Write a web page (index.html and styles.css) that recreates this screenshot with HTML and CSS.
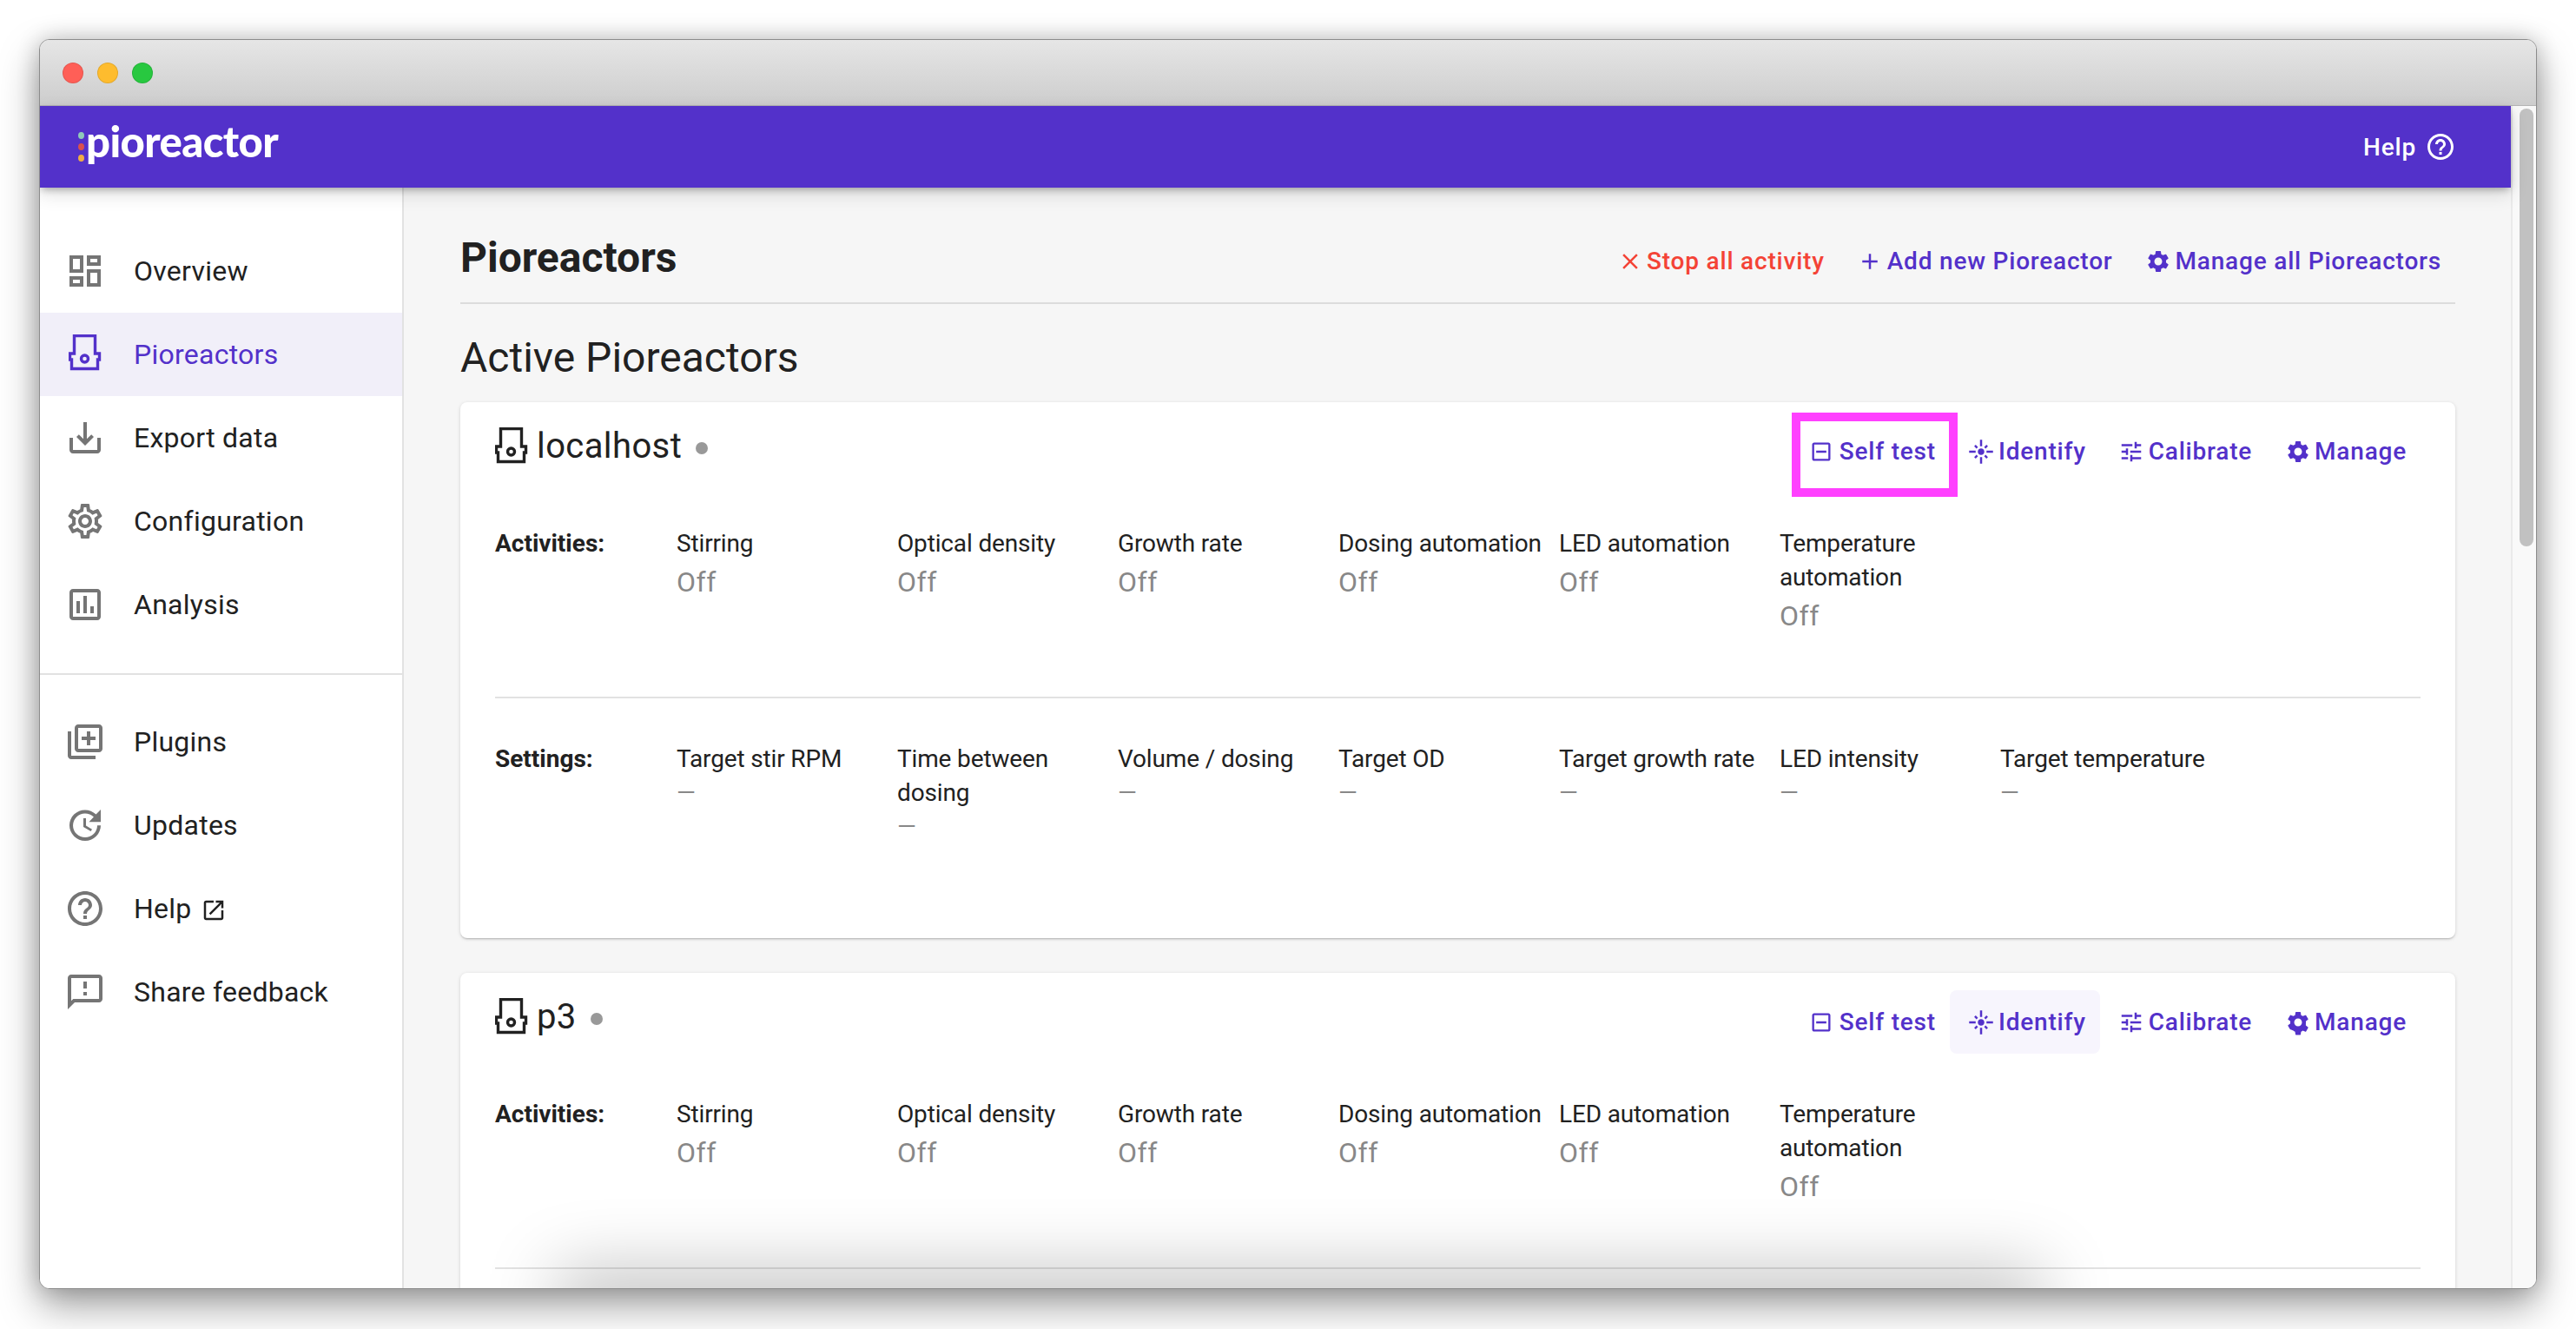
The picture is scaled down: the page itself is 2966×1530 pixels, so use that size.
FILE: index.html
```html
<!DOCTYPE html>
<html lang="en">
<head>
  <meta charset="UTF-8">
  <title>Pioreactors</title>
  <link rel="stylesheet" href="styles.css">
</head>
<body>
  <div class="window">
    <div class="titlebar">
      <span class="light light-red"></span>
      <span class="light light-yellow"></span>
      <span class="light light-green"></span>
    </div>

    <div class="viewport">
      <div class="page">
        <header class="topbar">
          <div class="logo">
            <span class="logo-dots"><i class="dot-teal"></i><i class="dot-red"></i><i class="dot-orange"></i></span>
            <span class="logo-text">pioreactor</span>
          </div>
          <a class="topbar-help">Help
            <svg viewBox="0 0 24 24"><path d="M11 18h2v-2h-2v2zm1-16C6.48 2 2 6.48 2 12s4.48 10 10 10 10-4.48 10-10S17.52 2 12 2zm0 18c-4.41 0-8-3.59-8-8s3.59-8 8-8 8 3.59 8 8-3.59 8-8 8zm0-14c-2.21 0-4 1.79-4 4h2c0-1.1.9-2 2-2s2 .9 2 2c0 2-3 1.75-3 5h2c0-2.25 3-2.5 3-5 0-2.21-1.79-4-4-4z"/></svg>
          </a>
        </header>

        <div class="columns">
          <!-- left menu -->
          <nav class="sidebar">
            <ul class="menu">
              <li class="menu-item">
                <svg class="menu-icon" viewBox="0 0 24 24"><path d="M19 5v2h-4V5h4M9 5v6H5V5h4m10 8v6h-4v-6h4M9 17v2H5v-2h4M21 3h-8v6h8V3zM11 3H3v10h8V3zm10 8h-8v10h8V11zm-10 4H3v6h8v-6z"/></svg>
                Overview
              </li>
              <li class="menu-item active">
                <svg class="menu-icon reactor-icon" viewBox="0 0 38 42"><path d="M6.5 1.5H30.500V22H35.500V29H33.500V39.500H3.500V29H1.500V22H6.500Z"/><circle cx="18.500" cy="28" r="4"/></svg>
                Pioreactors
              </li>
              <li class="menu-item">
                <svg class="menu-icon" viewBox="0 0 24 24"><path d="M19 12v7H5v-7H3v7c0 1.100.9 2 2 2h14c1.100 0 2-.9 2-2v-7h-2zm-6 .67l2.590-2.580L17 11.500l-5 5-5-5 1.410-1.410L11 12.670V3h2z"/></svg>
                Export data
              </li>
              <li class="menu-item">
                <svg class="menu-icon" viewBox="0 0 24 24"><path d="M19.430 12.980c.04-.32.07-.64.07-.98 0-.34-.03-.66-.07-.98l2.110-1.650c.19-.15.24-.42.12-.64l-2-3.460c-.09-.16-.26-.25-.44-.25-.06 0-.12.01-.17.03l-2.490 1c-.52-.4-1.080-.73-1.690-.98l-.38-2.650C14.460 2.180 14.250 2 14 2h-4c-.25 0-.46.18-.49.42l-.38 2.650c-.61.25-1.170.59-1.690.98l-2.490-1c-.06-.02-.12-.03-.18-.03-.17 0-.34.09-.43.25l-2 3.460c-.13.22-.07.49.12.64l2.110 1.650c-.04.32-.07.65-.07.98 0 .33.03.66.07.98l-2.110 1.650c-.19.15-.24.42-.12.64l2 3.460c.09.16.26.25.44.25.06 0 .12-.01.17-.03l2.490-1c.52.4 1.080.73 1.690.98l.38 2.650c.03.24.24.42.49.42h4c.25 0 .46-.18.49-.42l.38-2.650c.61-.25 1.170-.59 1.690-.98l2.490 1c.06.02.12.03.18.03.17 0 .34-.09.43-.25l2-3.460c.12-.22.07-.49-.12-.64l-2.110-1.650zm-1.980-1.710c.04.31.05.52.05.73 0 .21-.02.43-.05.73l-.14 1.130.89.7 1.080.84-.7 1.210-1.270-.51-1.040-.42-.9.68c-.43.32-.84.56-1.250.73l-1.060.43-.16 1.130-.2 1.350h-1.400l-.19-1.350-.16-1.130-1.060-.43c-.43-.18-.83-.41-1.230-.71l-.91-.7-1.060.43-1.270.51-.7-1.210 1.080-.84.89-.7-.14-1.130c-.03-.31-.05-.54-.05-.74s.02-.43.05-.73l.14-1.130-.89-.7-1.080-.84.7-1.210 1.270.51 1.040.42.9-.68c.43-.32.84-.56 1.250-.73l1.060-.43.16-1.130.2-1.350h1.390l.19 1.350.16 1.130 1.060.43c.43.18.83.41 1.230.71l.91.7 1.060-.43 1.270-.51.7 1.210-1.070.85-.89.7.14 1.130zM12 8c-2.210 0-4 1.790-4 4s1.790 4 4 4 4-1.790 4-4-1.790-4-4-4zm0 6c-1.100 0-2-.9-2-2s.9-2 2-2 2 .9 2 2-.9 2-2 2z"/></svg>
                Configuration
              </li>
              <li class="menu-item">
                <svg class="menu-icon" viewBox="0 0 24 24"><path d="M9 17H7v-7h2v7zm4 0h-2V7h2v10zm4 0h-2v-4h2v4zm2 2H5V5h14v14zm0-16H5c-1.100 0-2 .9-2 2v14c0 1.100.9 2 2 2h14c1.100 0 2-.9 2-2V5c0-1.100-.9-2-2-2z"/></svg>
                Analysis
              </li>
            </ul>
            <hr class="menu-divider">
            <ul class="menu">
              <li class="menu-item">
                <svg class="menu-icon" viewBox="0 0 24 24"><path d="M4 6H2v14c0 1.100.9 2 2 2h14v-2H4V6zm16-4H8c-1.100 0-2 .9-2 2v12c0 1.100.9 2 2 2h12c1.100 0 2-.9 2-2V4c0-1.100-.9-2-2-2zm0 14H8V4h12v12zm-7-2h2v-3h3V9h-3V6h-2v3h-3v2h3z"/></svg>
                Plugins
              </li>
              <li class="menu-item">
                <svg class="menu-icon" viewBox="0 0 24 24"><path d="M21 10.120h-6.780l2.740-2.820c-2.730-2.700-7.150-2.800-9.880-.1-2.730 2.710-2.730 7.080 0 9.790s7.150 2.710 9.880 0C18.320 15.650 19 14.080 19 12.100h2c0 1.980-.88 4.550-2.640 6.290-3.510 3.480-9.210 3.480-12.720 0-3.500-3.470-3.530-9.110-.02-12.580s9.140-3.470 12.650 0L21 3v7.120zM12.500 8v4.250l3.500 2.080-.72 1.210L11 13V8h1.500z"/></svg>
                Updates
              </li>
              <li class="menu-item">
                <svg class="menu-icon" viewBox="0 0 24 24"><path d="M11 18h2v-2h-2v2zm1-16C6.480 2 2 6.480 2 12s4.480 10 10 10 10-4.480 10-10S17.520 2 12 2zm0 18c-4.410 0-8-3.590-8-8s3.590-8 8-8 8 3.590 8 8-3.590 8-8 8zm0-14c-2.210 0-4 1.790-4 4h2c0-1.100.9-2 2-2s2 .9 2 2c0 2-3 1.750-3 5h2c0-2.250 3-2.500 3-5 0-2.210-1.790-4-4-4z"/></svg>
                Help
                <svg class="external-icon" viewBox="0 0 24 24"><path d="M19 19H5V5h7V3H5c-1.110 0-2 .9-2 2v14c0 1.100.89 2 2 2h14c1.100 0 2-.9 2-2v-7h-2v7zM14 3v2h3.590l-9.830 9.830 1.410 1.410L19 6.410V10h2V3h-7z"/></svg>
              </li>
              <li class="menu-item">
                <svg class="menu-icon" viewBox="0 0 24 24"><path d="M20 2H4c-1.100 0-1.990.9-1.990 2L2 22l4-4h14c1.100 0 2-.9 2-2V4c0-1.100-.9-2-2-2zm0 14H5.170L4 17.170V4h16v12zm-9-4h2v2h-2zm0-6h2v4h-2z"/></svg>
                Share feedback
              </li>
            </ul>
          </nav>

          <main class="content">
            <div class="page-head">
              <h1 class="page-title">Pioreactors</h1>
              <div class="actions">
                <a class="btn btn-danger">
                  <span class="btn-icon"><svg viewBox="0 0 24 24"><path d="M19 6.410L17.590 5 12 10.590 6.410 5 5 6.410 10.590 12 5 17.590 6.410 19 12 13.410 17.590 19 19 17.590 13.410 12z"/></svg></span>
                  Stop all activity
                </a>
                <a class="btn">
                  <span class="btn-icon"><svg viewBox="0 0 24 24"><path d="M19 13h-6v6h-2v-6H5v-2h6V5h2v6h6v2z"/></svg></span>
                  Add new Pioreactor
                </a>
                <a class="btn">
                  <span class="btn-icon"><svg viewBox="0 0 24 24"><path d="M19.140 12.940c.04-.3.06-.61.06-.94 0-.32-.02-.64-.07-.94l2.030-1.580c.18-.14.23-.41.12-.61l-1.920-3.320c-.12-.22-.37-.29-.59-.22l-2.390.96c-.5-.38-1.030-.7-1.620-.94l-.36-2.540c-.04-.24-.24-.41-.48-.41h-3.840c-.24 0-.43.17-.47.41l-.36 2.540c-.59.24-1.130.57-1.620.94l-2.390-.96c-.22-.08-.47 0-.59.22L2.740 8.870c-.12.21-.08.47.12.61l2.030 1.580c-.05.3-.09.63-.09.94s.02.64.07.94l-2.030 1.580c-.18.14-.23.41-.12.61l1.920 3.320c.12.22.37.29.59.22l2.390-.96c.5.38 1.030.7 1.620.94l.36 2.540c.05.24.24.41.48.41h3.840c.24 0 .44-.17.47-.41l.36-2.540c.59-.24 1.130-.56 1.620-.94l2.390.96c.22.08.47 0 .59-.22l1.920-3.320c.12-.22.07-.47-.12-.61l-2.010-1.580zM12 15.600c-1.980 0-3.600-1.620-3.600-3.600s1.620-3.600 3.600-3.600 3.600 1.620 3.600 3.600-1.620 3.600-3.600 3.600z"/></svg></span>
                  Manage all Pioreactors
                </a>
              </div>
            </div>

            <h2 class="section-title">Active Pioreactors</h2>

            <!-- localhost -->
            <section class="card">
              <div class="card-head">
                <div class="unit-name">
                  <svg class="reactor-icon" viewBox="0 0 38 42"><path d="M6.5 1.5H30.500V22H35.500V29H33.500V39.500H3.500V29H1.500V22H6.500Z"/><circle cx="18.500" cy="28" r="4"/></svg>
                  <span>localhost</span>
                  <i class="status-dot"></i>
                </div>
                <div class="actions">
                  <a class="btn highlighted">
                    <span class="btn-icon"><svg class="test-glyph" viewBox="0 0 24 24"><path d="M7 11h10v2H7zm12-8H5c-1.100 0-2 .9-2 2v14c0 1.100.9 2 2 2h14c1.100 0 2-.9 2-2V5c0-1.100-.9-2-2-2zm0 16H5V5h14v14z"/></svg></span>
                    Self test
                  </a>
                  <a class="btn">
                    <span class="btn-icon"><svg viewBox="0 0 24 24"><path d="M7 11H1v2h6v-2zm2.170-3.240L7.050 5.640 5.640 7.050l2.120 2.120 1.410-1.410zM13 1h-2v6h2V1zm5.360 6.050l-1.410-1.410-2.120 2.120 1.410 1.410 2.120-2.120zM17 11v2h6v-2h-6zm-5-2c-1.660 0-3 1.340-3 3s1.340 3 3 3 3-1.340 3-3-1.340-3-3-3zm2.830 7.240l2.120 2.120 1.410-1.410-2.120-2.120-1.410 1.410zm-9.190.71l1.410 1.410 2.120-2.120-1.410-1.410-2.120 2.120zM11 23h2v-6h-2v6z"/></svg></span>
                    Identify
                  </a>
                  <a class="btn">
                    <span class="btn-icon"><svg viewBox="0 0 24 24"><path d="M3 17v2h6v-2H3zM3 5v2h10V5H3zm10 16v-2h8v-2h-8v-2h-2v6h2zM7 9v2H3v2h4v2h2V9H7zm14 4v-2H11v2h10zm-6-4h2V7h4V5h-4V3h-2v6z"/></svg></span>
                    Calibrate
                  </a>
                  <a class="btn">
                    <span class="btn-icon"><svg viewBox="0 0 24 24"><path d="M19.140 12.940c.04-.3.06-.61.06-.94 0-.32-.02-.64-.07-.94l2.030-1.580c.18-.14.23-.41.12-.61l-1.920-3.320c-.12-.22-.37-.29-.59-.22l-2.390.96c-.5-.38-1.030-.7-1.620-.94l-.36-2.540c-.04-.24-.24-.41-.48-.41h-3.840c-.24 0-.43.17-.47.41l-.36 2.540c-.59.24-1.130.57-1.620.94l-2.390-.96c-.22-.08-.47 0-.59.22L2.740 8.870c-.12.21-.08.47.12.61l2.030 1.580c-.05.3-.09.63-.09.94s.02.64.07.94l-2.030 1.580c-.18.14-.23.41-.12.61l1.920 3.320c.12.22.37.29.59.22l2.390-.96c.5.38 1.030.7 1.620.94l.36 2.540c.05.24.24.41.48.41h3.840c.24 0 .44-.17.47-.41l.36-2.540c.59-.24 1.130-.56 1.620-.94l2.390.96c.22.08.47 0 .59-.22l1.920-3.320c.12-.22.07-.47-.12-.61l-2.010-1.580zM12 15.600c-1.980 0-3.600-1.620-3.600-3.600s1.620-3.600 3.600-3.600 3.600 1.620 3.600 3.600-1.620 3.600-3.600 3.600z"/></svg></span>
                    Manage
                  </a>
                </div>
              </div>

              <div class="stat-row">
                <div class="stat-label">Activities:</div>
                <div class="stat"><div class="stat-name">Stirring</div><div class="stat-value">Off</div></div>
                <div class="stat"><div class="stat-name">Optical density</div><div class="stat-value">Off</div></div>
                <div class="stat"><div class="stat-name">Growth rate</div><div class="stat-value">Off</div></div>
                <div class="stat"><div class="stat-name">Dosing automation</div><div class="stat-value">Off</div></div>
                <div class="stat"><div class="stat-name">LED automation</div><div class="stat-value">Off</div></div>
                <div class="stat"><div class="stat-name">Temperature automation</div><div class="stat-value">Off</div></div>
              </div>

              <hr class="card-divider">

              <div class="stat-row settings-row">
                <div class="stat-label">Settings:</div>
                <div class="stat"><div class="stat-name">Target stir RPM</div><div class="stat-empty">—</div></div>
                <div class="stat"><div class="stat-name">Time between dosing</div><div class="stat-empty">—</div></div>
                <div class="stat"><div class="stat-name">Volume / dosing</div><div class="stat-empty">—</div></div>
                <div class="stat"><div class="stat-name">Target OD</div><div class="stat-empty">—</div></div>
                <div class="stat"><div class="stat-name">Target growth rate</div><div class="stat-empty">—</div></div>
                <div class="stat"><div class="stat-name">LED intensity</div><div class="stat-empty">—</div></div>
                <div class="stat"><div class="stat-name">Target temperature</div><div class="stat-empty">—</div></div>
              </div>
            </section>

            <!-- p3 -->
            <section class="card">
              <div class="card-head">
                <div class="unit-name">
                  <svg class="reactor-icon" viewBox="0 0 38 42"><path d="M6.5 1.5H30.500V22H35.500V29H33.500V39.500H3.500V29H1.500V22H6.500Z"/><circle cx="18.500" cy="28" r="4"/></svg>
                  <span>p3</span>
                  <i class="status-dot"></i>
                </div>
                <div class="actions">
                  <a class="btn">
                    <span class="btn-icon"><svg class="test-glyph" viewBox="0 0 24 24"><path d="M7 11h10v2H7zm12-8H5c-1.100 0-2 .9-2 2v14c0 1.100.9 2 2 2h14c1.100 0 2-.9 2-2V5c0-1.100-.9-2-2-2zm0 16H5V5h14v14z"/></svg></span>
                    Self test
                  </a>
                  <a class="btn hovered">
                    <span class="btn-icon"><svg viewBox="0 0 24 24"><path d="M7 11H1v2h6v-2zm2.170-3.240L7.050 5.640 5.640 7.050l2.120 2.120 1.410-1.410zM13 1h-2v6h2V1zm5.360 6.050l-1.410-1.410-2.120 2.120 1.410 1.410 2.120-2.120zM17 11v2h6v-2h-6zm-5-2c-1.660 0-3 1.340-3 3s1.340 3 3 3 3-1.340 3-3-1.340-3-3-3zm2.830 7.240l2.120 2.120 1.410-1.410-2.120-2.120-1.410 1.410zm-9.190.71l1.410 1.410 2.120-2.120-1.410-1.410-2.120 2.120zM11 23h2v-6h-2v6z"/></svg></span>
                    Identify
                  </a>
                  <a class="btn">
                    <span class="btn-icon"><svg viewBox="0 0 24 24"><path d="M3 17v2h6v-2H3zM3 5v2h10V5H3zm10 16v-2h8v-2h-8v-2h-2v6h2zM7 9v2H3v2h4v2h2V9H7zm14 4v-2H11v2h10zm-6-4h2V7h4V5h-4V3h-2v6z"/></svg></span>
                    Calibrate
                  </a>
                  <a class="btn">
                    <span class="btn-icon"><svg viewBox="0 0 24 24"><path d="M19.140 12.940c.04-.3.06-.61.06-.94 0-.32-.02-.64-.07-.94l2.030-1.580c.18-.14.23-.41.12-.61l-1.920-3.320c-.12-.22-.37-.29-.59-.22l-2.390.96c-.5-.38-1.030-.7-1.620-.94l-.36-2.540c-.04-.24-.24-.41-.48-.41h-3.840c-.24 0-.43.17-.47.41l-.36 2.540c-.59.24-1.130.57-1.620.94l-2.390-.96c-.22-.08-.47 0-.59.22L2.740 8.870c-.12.21-.08.47.12.61l2.030 1.580c-.05.3-.09.63-.09.94s.02.64.07.94l-2.030 1.580c-.18.14-.23.41-.12.61l1.920 3.320c.12.22.37.29.59.22l2.390.96c.5.38 1.030.7 1.620.94l.36 2.540c.05.24.24.41.48.41h3.840c.24 0 .44-.17.47-.41l.36-2.540c.59-.24 1.130-.56 1.620-.94l2.390.96c.22.08.47 0 .59-.22l1.920-3.320c.12-.22.07-.47-.12-.61l-2.010-1.580zM12 15.600c-1.980 0-3.600-1.620-3.600-3.600s1.620-3.600 3.600-3.600 3.600 1.620 3.600 3.600-1.620 3.600-3.600 3.600z"/></svg></span>
                    Manage
                  </a>
                </div>
              </div>

              <div class="stat-row">
                <div class="stat-label">Activities:</div>
                <div class="stat"><div class="stat-name">Stirring</div><div class="stat-value">Off</div></div>
                <div class="stat"><div class="stat-name">Optical density</div><div class="stat-value">Off</div></div>
                <div class="stat"><div class="stat-name">Growth rate</div><div class="stat-value">Off</div></div>
                <div class="stat"><div class="stat-name">Dosing automation</div><div class="stat-value">Off</div></div>
                <div class="stat"><div class="stat-name">LED automation</div><div class="stat-value">Off</div></div>
                <div class="stat"><div class="stat-name">Temperature automation</div><div class="stat-value">Off</div></div>
              </div>

              <hr class="card-divider">
            </section>
          </main>
        </div>
      </div>

      <div class="scrollbar"><div class="scrollbar-thumb"></div></div>
    </div>

    <div class="bottom-smudge"></div>
  </div>
</body>
</html>
```

FILE: styles.css
```css
/* base */
html, body {
  margin: 0;
  height: 100%;
}
body {
  box-sizing: border-box;
  height: 1530px;
  padding: 45px 45px 46px;
  overflow: hidden;
  background-color: #fff;
  font-family: Roboto, "Liberation Sans", sans-serif;
  color: #212121;
}
a {
  color: inherit;
  text-decoration: none;
}
ul {
  list-style: none;
  margin: 0;
  padding: 0;
}
svg {
  fill: currentColor;
  display: block;
}

/* browser window */
.window {
  position: relative;
  box-sizing: border-box;
  width: 2876px;
  height: 1439px;
  display: flex;
  flex-direction: column;
  overflow: hidden;
  border: 1px solid #8c8c8c;
  border-radius: 12px;
  background-color: #fff;
  box-shadow: 0 20px 46px rgba(0, 0, 0, 0.36), 0 0 26px rgba(0, 0, 0, 0.2);
}
.titlebar {
  flex: none;
  height: 75px;
  display: flex;
  align-items: center;
  gap: 16px;
  padding-left: 26px;
  background: linear-gradient(#e6e6e6, #cdcdcd);
  border-bottom: 1px solid #b4b4b4;
}
.light {
  width: 24px;
  height: 24px;
  border-radius: 50%;
  box-sizing: border-box;
  border: 1px solid rgba(0, 0, 0, 0.1);
}
.light-red { background-color: #ff5f57; }
.light-yellow { background-color: #febc2e; }
.light-green { background-color: #28c840; }

.viewport {
  flex: 1;
  min-height: 0;
  display: flex;
}
.page {
  flex: 1;
  min-width: 0;
  display: flex;
  flex-direction: column;
}
.scrollbar {
  flex: none;
  box-sizing: border-box;
  width: 29px;
  padding: 3px 3px 0 8px;
  background-color: #f9f9f9;
  border-left: 2px solid #eaeaea;
}
.scrollbar-thumb {
  height: 504px;
  border-radius: 9px;
  background-color: #c1c1c1;
}

/* purple bar */
.topbar {
  position: relative;
  z-index: 1;
  flex: none;
  height: 94px;
  display: flex;
  align-items: center;
  justify-content: space-between;
  padding: 0 63px 0 44px;
  background-color: #5331ca;
  color: #fff;
  box-shadow: 0 4px 8px -2px rgba(0, 0, 0, 0.3), 0 8px 20px rgba(0, 0, 0, 0.12);
}
.logo {
  display: flex;
  align-items: center;
  gap: 2px;
  margin-bottom: 14px;
}
.logo-dots {
  display: flex;
  flex-direction: column;
  gap: 5px;
  margin-top: 14px;
}
.logo-dots i {
  width: 7px;
  height: 8px;
  border-radius: 50%;
}
.dot-teal { background-color: #8fcab9; }
.dot-red { background-color: #d9504e; }
.dot-orange { background-color: #efac45; }
.logo-text {
  font-family: Lato, sans-serif;
  font-weight: 900;
  font-size: 49px;
  line-height: 60px;
  letter-spacing: -0.6px;
}
.topbar-help {
  display: flex;
  align-items: center;
  gap: 10px;
  font-size: 28px;
  font-weight: 500;
  letter-spacing: 0.8px;
}
.topbar-help svg {
  width: 36px;
  height: 36px;
}

/* page below the bar */
.columns {
  flex: 1;
  min-height: 0;
  display: flex;
}
.sidebar {
  flex: none;
  width: 419px;
  box-sizing: border-box;
  padding-top: 48px;
  background-color: #fff;
  border-right: 2px solid #e2e2e2;
}
.menu-item {
  height: 96px;
  display: flex;
  align-items: center;
  padding-left: 28px;
  font-size: 32px;
  letter-spacing: 0.25px;
  color: #212121;
}
.menu-item.active {
  background-color: #f1eff9;
  color: #5331ca;
}
.menu-icon {
  flex: none;
  width: 48px;
  height: 48px;
  margin-right: 32px;
  color: #757575;
}
.active .menu-icon {
  color: #5331ca;
}
.menu-icon.reactor-icon {
  width: 38px;
  height: 42px;
  margin-left: 5px;
  margin-right: 37px;
  margin-top: -4px;
}
.external-icon {
  width: 30px;
  height: 30px;
  margin-left: 10px;
  margin-top: 4px;
}
.menu-divider {
  margin: 31px 0 29px;
  border: 0;
  height: 2px;
  background-color: #e2e2e2;
}
.reactor-icon {
  fill: none;
  stroke: currentColor;
  stroke-width: 3.4;
}

.content {
  flex: 1;
  min-width: 0;
  box-sizing: border-box;
  padding: 0 64px 0 65px;
  background-color: #f6f6f6;
}
.page-head {
  box-sizing: border-box;
  height: 134px;
  padding-top: 30px;
  display: flex;
  align-items: center;
  justify-content: space-between;
  border-bottom: 2px solid #dcdcdc;
}
.page-title {
  margin: 0;
  font-size: 48px;
  font-weight: 700;
  line-height: 56px;
}
.section-title {
  margin: 33px 0 0;
  height: 80px;
  font-size: 48px;
  font-weight: 400;
  line-height: 58px;
}
.actions {
  display: flex;
}
.page-head .actions {
  margin-top: 7px;
}

/* text buttons */
.btn {
  display: flex;
  align-items: center;
  height: 73px;
  padding: 0 16px;
  border-radius: 8px;
  color: #5331ca;
  font-size: 28px;
  font-weight: 500;
  letter-spacing: 0.8px;
  white-space: nowrap;
}
.btn-danger {
  color: #f44336;
}
.btn.hovered {
  background-color: #f7f5fd;
}
.btn-icon {
  flex: none;
  width: 36px;
  height: 36px;
  margin-right: 4px;
  padding-left: 5px;
  box-sizing: border-box;
  display: flex;
  align-items: center;
  justify-content: center;
}
.btn-icon svg {
  flex: none;
  width: 30px;
  height: 30px;
}
.btn-icon .test-glyph {
  width: 28px;
  height: 28px;
  margin-left: -2px;
}
.btn.highlighted {
  position: relative;
}
/* pink marker drawn over the screenshot */
.btn.highlighted::after {
  content: "";
  position: absolute;
  left: 1px;
  top: -8px;
  width: 191px;
  height: 97px;
  box-sizing: border-box;
  border: 10px solid #ff40ff;
}

/* unit cards */
.card {
  box-sizing: border-box;
  height: 617px;
  margin-bottom: 40px;
  padding: 20px 40px 0;
  border-radius: 8px;
  background-color: #fff;
  box-shadow: 0 2px 2px -1px rgba(0, 0, 0, 0.2), 0 1px 4px rgba(0, 0, 0, 0.14);
}
.card-head {
  display: flex;
  justify-content: space-between;
  height: 123px;
}
.unit-name {
  display: flex;
  align-items: flex-start;
  padding-top: 9px;
  font-size: 40px;
  line-height: 44px;
  letter-spacing: 0.4px;
}
.unit-name .reactor-icon {
  width: 38px;
  height: 42px;
  margin-right: 10px;
}
.status-dot {
  width: 14px;
  height: 14px;
  margin: 17px 0 0 16px;
  border-radius: 50%;
  background-color: #999;
}
.stat-row {
  display: grid;
  grid-template-columns: 209px repeat(7, 254px);
  height: 196px;
  font-size: 28px;
  line-height: 39px;
  letter-spacing: -0.15px;
}
.settings-row {
  height: auto;
  margin-top: 50px;
}
.stat-label {
  font-weight: 700;
  letter-spacing: 0;
}
.stat-name {
  padding-right: 12px;
}
.stat-value {
  margin-top: 1px;
  font-size: 32px;
  line-height: 48px;
  letter-spacing: 0.5px;
  color: #888;
}
.stat-empty {
  color: #888;
  line-height: 40px;
}
.card-divider {
  margin: 0;
  border: 0;
  height: 2px;
  background-color: #e2e2e2;
}

/* soft dark patch at the bottom edge of the window */
.bottom-smudge {
  position: absolute;
  left: 615px;
  bottom: -30px;
  width: 1670px;
  height: 30px;
  background-color: #000;
  box-shadow: 0 0 80px 20px rgba(0, 0, 0, 0.25);
  pointer-events: none;
}
```
